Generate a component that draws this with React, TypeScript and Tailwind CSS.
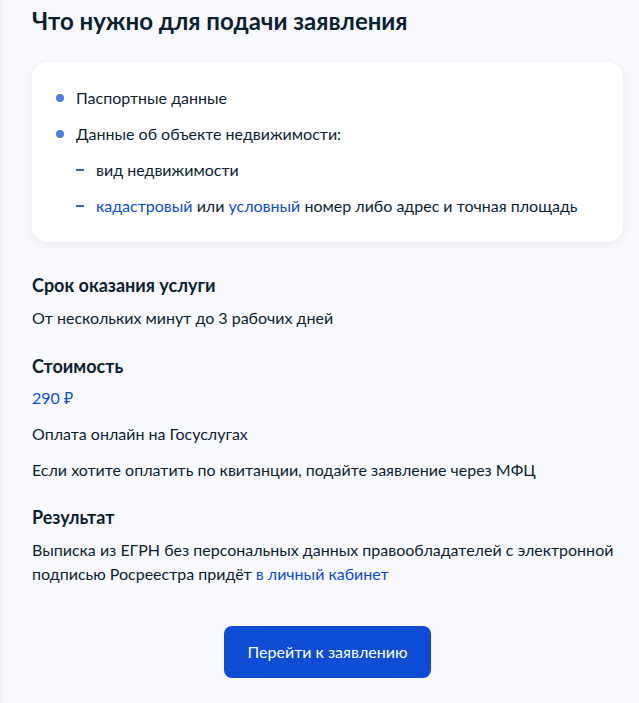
import React from "react";

export default function App() {
  return (
    <div
      className="w-[639px] h-[703px] bg-[#f8f9fd] border-l-[3px] border-[#f1f3f8] text-[#0b1f33] overflow-hidden"
      style={{ fontFamily: "Lato, 'Noto Sans', sans-serif" }}
    >
      <div className="pl-[29px] pr-[16px] pt-[5px]">
        <h2 className="text-[24px] leading-[32px] font-bold">Что нужно для подачи заявления</h2>

        <div className="mt-[25px] w-[591px] bg-white rounded-[16px] shadow-[0_2px_10px_rgba(11,31,51,0.06)] pl-[24px] pr-[16px] pt-[24px] pb-[24px]">
          <ul className="flex flex-col gap-[12px] text-[16px] leading-[24px]">
            <li className="flex items-center">
              <span className="w-[8px] h-[8px] rounded-full bg-[#4a7bea] mr-[12px]" />
              Паспортные данные
            </li>
            <li className="flex items-center">
              <span className="w-[8px] h-[8px] rounded-full bg-[#4a7bea] mr-[12px]" />
              Данные об объекте недвижимости:
            </li>
            <li className="flex items-center pl-[20px]">
              <span className="w-[8px] h-[2px] bg-[#3f63ad] mr-[12px]" />
              вид недвижимости
            </li>
            <li className="flex items-center pl-[20px]">
              <span className="w-[8px] h-[2px] bg-[#3f63ad] mr-[12px]" />
              <span>
                <span className="text-[#0d4cd3]">кадастровый</span> или{" "}
                <span className="text-[#0d4cd3]">условный</span> номер либо адрес и точная площадь
              </span>
            </li>
          </ul>
        </div>

        <div className="mt-[31px] text-[16px] leading-[24px]">
          <h3 className="text-[18px] leading-[24px] font-bold">Срок оказания услуги</h3>
          <p className="mt-[9px]">От нескольких минут до 3 рабочих дней</p>

          <h3 className="mt-[24px] text-[18px] leading-[24px] font-bold">Стоимость</h3>
          <p className="mt-[8px] text-[#0d4cd3]">290 ₽</p>
          <p className="mt-[12px]">Оплата онлайн на Госуслугах</p>
          <p className="mt-[12px]">Если хотите оплатить по квитанции, подайте заявление через МФЦ</p>

          <h3 className="mt-[23px] text-[18px] leading-[24px] font-bold">Результат</h3>
          <p className="mt-[9px]">
            Выписка из ЕГРН без персональных данных правообладателей с электронной подписью Росреестра придёт{" "}
            <span className="text-[#0d4cd3]">в личный кабинет</span>
          </p>
        </div>

        <div className="flex justify-center mt-[40px]">
          <button className="h-[52px] px-[24px] whitespace-nowrap rounded-[8px] bg-[#0d4cd3] text-white text-[16px]">
            Перейти к заявлению
          </button>
        </div>
      </div>
    </div>
  );
}
